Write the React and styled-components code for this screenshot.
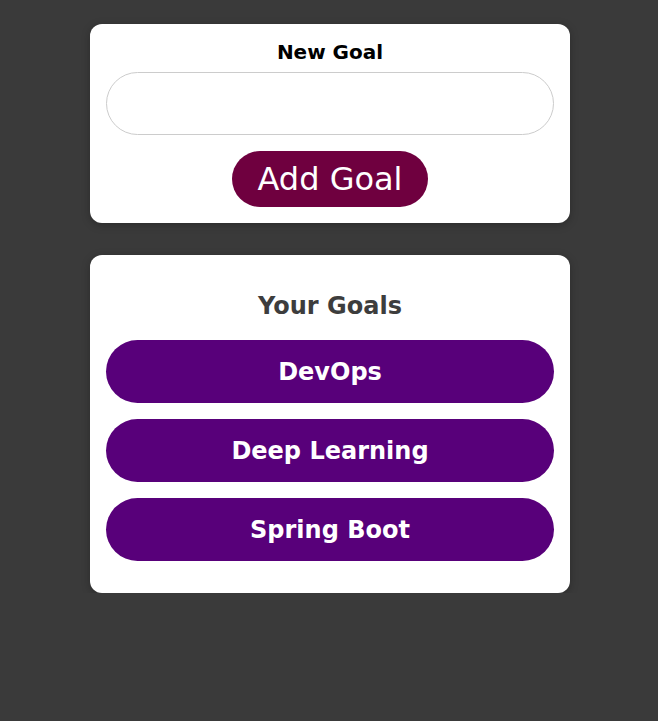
import React from 'react';
import styled, { createGlobalStyle } from 'styled-components';

const GlobalStyle = createGlobalStyle`
    * {
        box-sizing: border-box;
    }

    body {
        margin: 0;
        background: #3a3a3a;
        font-family: 'DejaVu Sans', sans-serif;
    }
`

const Page = styled.main`
    display: flex;
    flex-direction: column;
    align-items: center;
    gap: 32px;
    padding: 24px 0 0 2px;
`

const Card = styled.section`
    width: 480px;
    padding: 16px;
    background: #fff;
    border-radius: 12px;
    box-shadow: 0 2px 8px rgba(0, 0, 0, 0.26);
    display: flex;
    flex-direction: column;
    align-items: center;
`

const Label = styled.label`
    font-size: 20px;
    font-weight: 700;
    line-height: 23px;
    color: #000;
    margin: 1px 0 8px;
`

const Input = styled.input`
    width: 100%;
    height: 63px;
    border: 1px solid #ccc;
    border-radius: 32px;
    padding: 0 24px;
    font: inherit;
    font-size: 20px;
    outline: none;
`

const AddButton = styled.button`
    margin-top: 16px;
    width: 196px;
    height: 56px;
    border: none;
    border-radius: 28px;
    background: #6f003f;
    color: #fff;
    font-family: 'DejaVu Sans', sans-serif;
    font-size: 32px;
    cursor: pointer;
`

const Title = styled.h2`
    margin: 21px 0 20px;
    font-size: 24px;
    line-height: 28px;
    font-weight: 700;
    color: #3d3d3d;
`

const GoalList = styled.ul`
    list-style: none;
    margin: 0 0 16px;
    padding: 0;
    width: 100%;
    display: flex;
    flex-direction: column;
    gap: 16px;
`

const GoalItem = styled.li`
    height: 63px;
    border-radius: 32px;
    background: #58007a;
    color: #fff;
    font-size: 24px;
    font-weight: 700;
    display: flex;
    align-items: center;
    justify-content: center;
`

const goals = ['DevOps', 'Deep Learning', 'Spring Boot'];

const App = () => (
    <>
        <GlobalStyle />
        <Page>
            <Card>
                <Label htmlFor="goal">New Goal</Label>
                <Input id="goal" type="text" />
                <AddButton>Add Goal</AddButton>
            </Card>
            <Card>
                <Title>Your Goals</Title>
                <GoalList>
                    {goals.map(goal => <GoalItem key={goal}>{goal}</GoalItem>)}
                </GoalList>
            </Card>
        </Page>
    </>
)

export default App;
